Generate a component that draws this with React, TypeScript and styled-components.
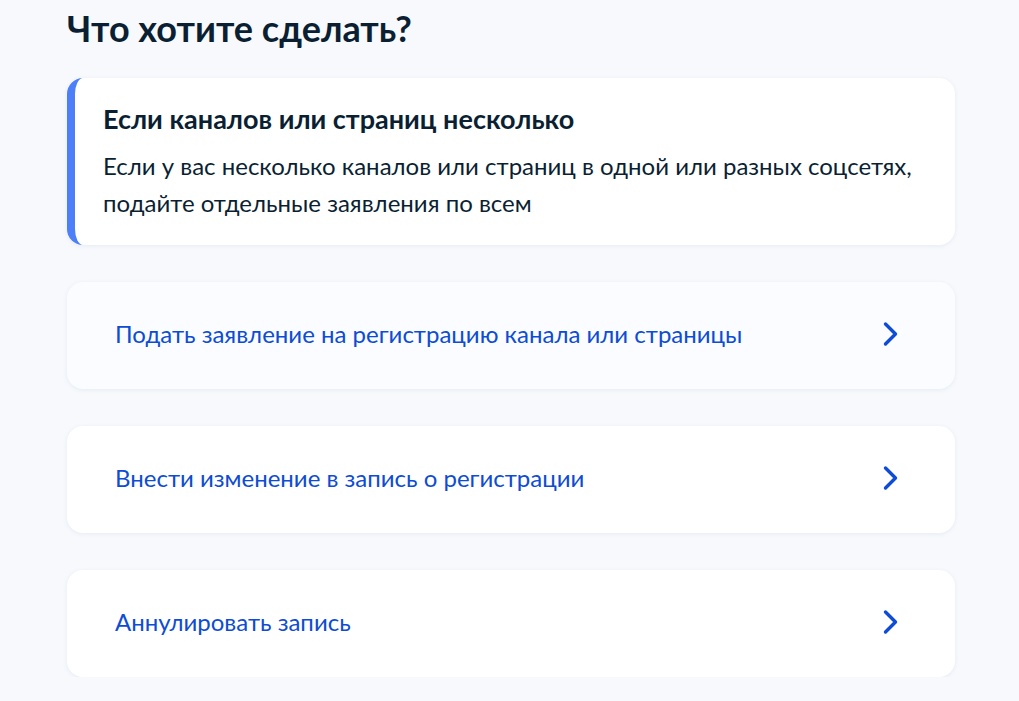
import React from "react";
import styled, { createGlobalStyle } from "styled-components";

const GlobalStyle = createGlobalStyle`
  html, body {
    margin: 0;
    padding: 0;
    background: #f7f9fc;
    font-family: Lato, "Noto Sans", sans-serif;
    color: #0b1f33;
  }
`;

type Action = {
  id: number;
  label: string;
};

const actions: Action[] = [
  { id: 1, label: "Подать заявление на регистрацию канала или страницы" },
  { id: 2, label: "Внести изменение в запись о регистрации" },
  { id: 3, label: "Аннулировать запись" },
];

const Chevron = () => (
  <svg width="18" height="26" viewBox="0 0 18 26" fill="none">
    <path
      d="M3.5 3L13.5 13L3.5 23"
      stroke="#0d4cd3"
      strokeWidth="3.4"
      strokeLinecap="round"
      strokeLinejoin="round"
    />
  </svg>
);

const App = () => {
  return (
    <>
      <GlobalStyle />
      <Page>
        <Title>Что хотите сделать?</Title>
        <Notice>
          <NoticeTitle>Если каналов или страниц несколько</NoticeTitle>
          <NoticeText>
            Если у вас несколько каналов или страниц в одной или разных соцсетях,
            подайте отдельные заявления по всем
          </NoticeText>
        </Notice>
        <List>
          {actions.map((el, key) => (
            <ActionCard key={el.id} $active={key === 0}>
              <ActionLabel>{el.label}</ActionLabel>
              <Chevron />
            </ActionCard>
          ))}
        </List>
      </Page>
    </>
  );
};

export default App;

const Page = styled.div`
  width: 888px;
  margin-left: 67px;
  padding-top: 6px;
`;

const Title = styled.h1`
  margin: 0 0 28px;
  font-size: 36px;
  line-height: 44px;
  font-weight: 700;
  color: #0b1f33;
`;

const Notice = styled.div`
  background: #fff;
  border-left: 8px solid #4d7ff8;
  border-radius: 16px;
  padding: 25px 40px 24px 28px;
  box-shadow: 0 1px 4px rgba(134, 157, 200, 0.15);
`;

const NoticeTitle = styled.div`
  font-size: 27px;
  line-height: 32px;
  font-weight: 700;
  margin-bottom: 12px;
`;

const NoticeText = styled.div`
  font-size: 24px;
  line-height: 37px;
`;

const List = styled.div`
  display: flex;
  flex-direction: column;
  gap: 37px;
  margin-top: 37px;
`;

const ActionCard = styled.div<{ $active?: boolean }>`
  display: flex;
  align-items: center;
  justify-content: space-between;
  height: 107px;
  box-sizing: border-box;
  padding: 0 55px 3px 48px;
  border-radius: 16px;
  background: ${(p) => (p.$active ? "#fafcff" : "#ffffff")};
  box-shadow: 0 1px 4px rgba(134, 157, 200, 0.15);
  cursor: pointer;
`;

const ActionLabel = styled.span`
  font-size: 24px;
  line-height: 32px;
  color: #0d4cd3;
`;
